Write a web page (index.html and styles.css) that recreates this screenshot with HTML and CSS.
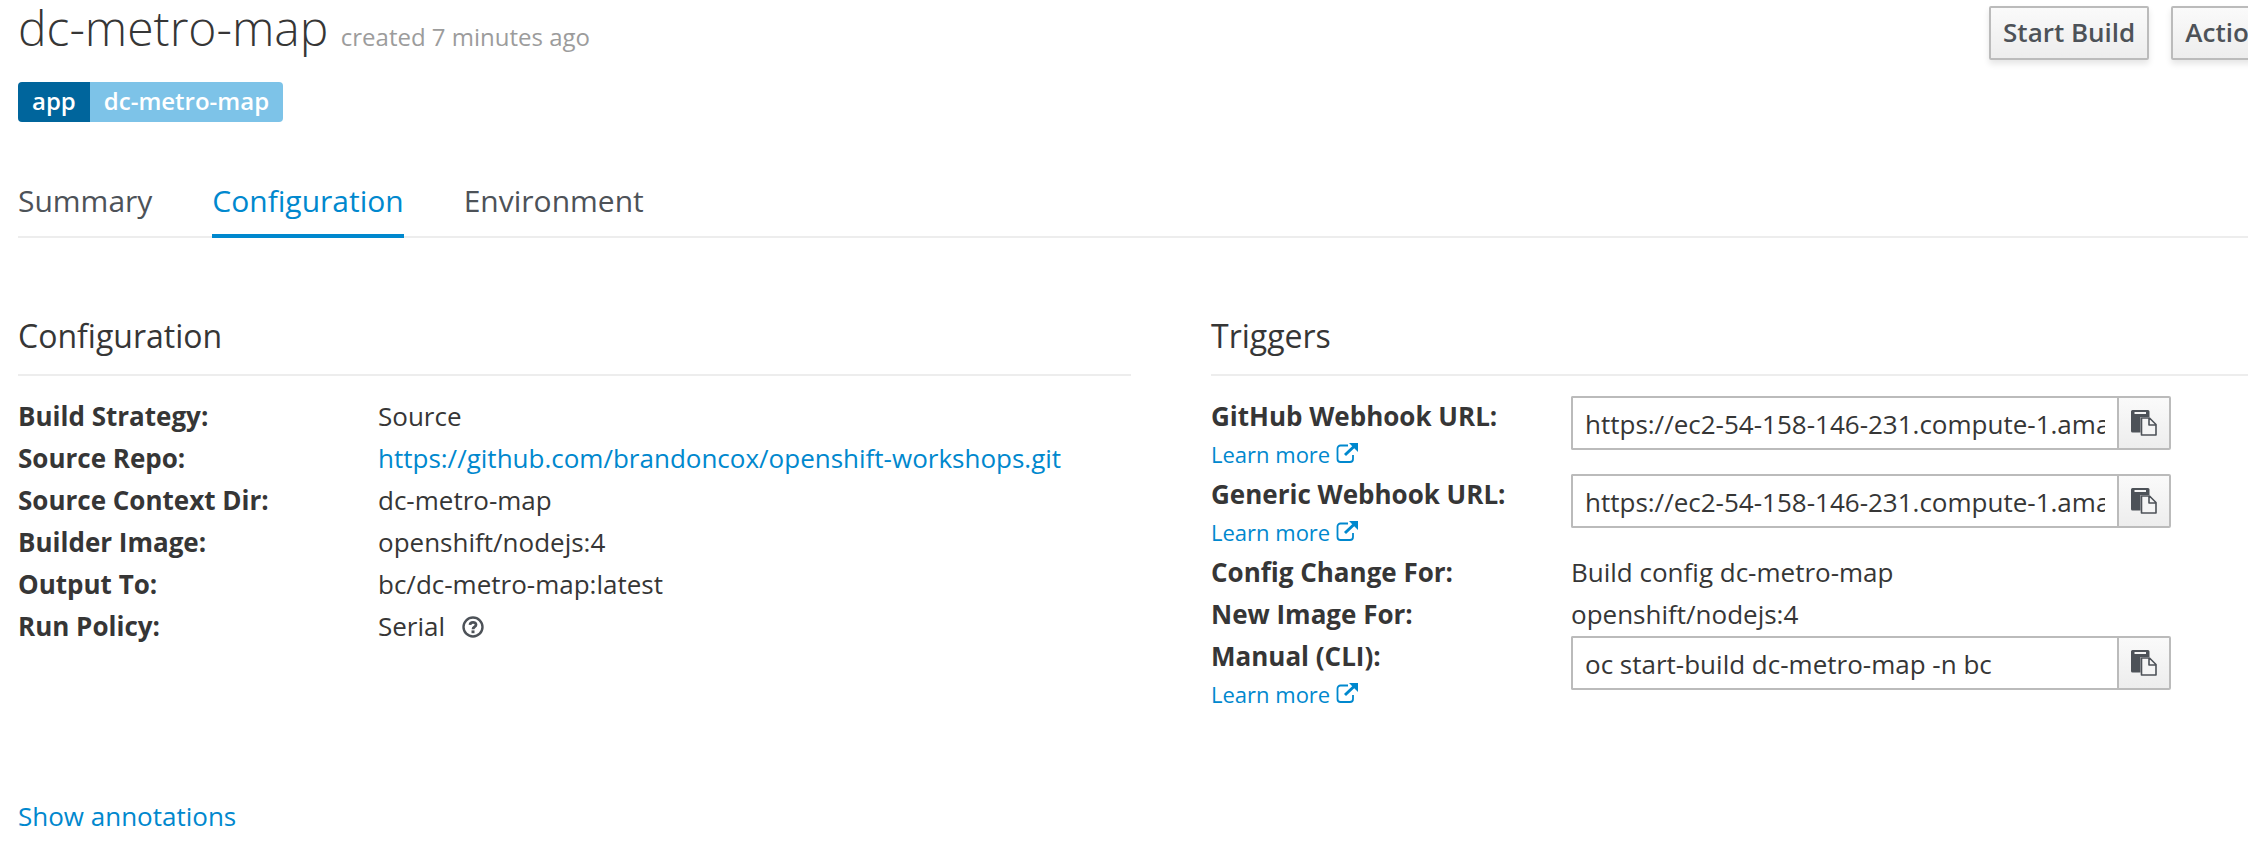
FILE: index.html
```html
<!DOCTYPE html>
<html lang="en">
<head>
<meta charset="utf-8">
<title>dc-metro-map</title>
<link rel="stylesheet" href="styles.css">
</head>
<body>
<svg class="sprite" aria-hidden="true">
  <symbol id="external" viewBox="0 0 22 20">
    <path d="M12 2.500H4.500a3 3 0 0 0-3 3V16a3 3 0 0 0 3 3H14a3 3 0 0 0 3-3v-4" fill="none" stroke="currentColor" stroke-width="1.800"/>
    <path d="M9 12 18 3.500" fill="none" stroke="currentColor" stroke-width="3"/>
    <path d="M13 0H22V9Z" fill="currentColor"/>
  </symbol>
  <symbol id="paste" viewBox="0 0 26 26">
    <path d="M1.500 0H17a1.500 1.500 0 0 1 1.500 1.500V7H9.500V22.500H1.500A1.500 1.500 0 0 1 0 21V1.500A1.500 1.500 0 0 1 1.500 0Z" fill="currentColor"/>
    <path d="M3.500 3H15" stroke="#f5f5f5" stroke-width="2"/>
    <path d="M10.500 8H18.500L25 14.500V25H10.500ZM18 8V15H25" fill="#f5f5f5" stroke="currentColor" stroke-width="1.600" stroke-linejoin="round"/>
  </symbol>
  <symbol id="help" viewBox="0 0 22 22">
    <circle cx="11" cy="11" r="9.500" fill="none" stroke="currentColor" stroke-width="2.400"/>
    <path d="M8 8.800C8.200 5.600 14 5.400 14 8.800C14 11 11 10.800 11 13.200" fill="none" stroke="currentColor" stroke-width="2.800"/>
    <path d="M9.500 14.400h3v2.800h-3z" fill="currentColor"/>
  </symbol>
</svg>
<main class="page">
  <header class="header">
    <h1 class="title">dc-metro-map <small class="created">created 7 minutes ago</small></h1>
    <div class="actions">
      <button class="btn" type="button">Start Build</button>
      <button class="btn" type="button">Actions <span class="caret"></span></button>
    </div>
  </header>
  <div class="labels">
    <a class="label label-key" href="#app">app</a><a class="label label-value" href="#app">dc-metro-map</a>
  </div>
  <nav class="tabs">
    <a class="tab" href="#summary">Summary</a>
    <a class="tab tab-active" href="#configuration" aria-current="page">Configuration</a>
    <a class="tab" href="#environment">Environment</a>
  </nav>
  <div class="columns">
    <section>
      <h2 class="heading">Configuration</h2>
      <dl class="details">
        <dt>Build Strategy:</dt><dd>Source</dd>
        <dt>Source Repo:</dt><dd><a href="#repo">https://github.com/brandoncox/openshift-workshops.git</a></dd>
        <dt>Source Context Dir:</dt><dd>dc-metro-map</dd>
        <dt>Builder Image:</dt><dd>openshift/nodejs:4</dd>
        <dt>Output To:</dt><dd>bc/dc-metro-map:latest</dd>
        <dt>Run Policy:</dt><dd>Serial <svg class="icon-help" role="img" aria-label="Help"><use href="#help"/></svg></dd>
      </dl>
    </section>
    <section>
      <h2 class="heading">Triggers</h2>
      <dl class="details">
        <dt><label for="github">GitHub Webhook URL:</label><a class="learn" href="#learn">Learn more <svg class="icon-external" aria-hidden="true"><use href="#external"/></svg></a></dt>
        <dd><div class="copy"><input class="copy-text" id="github" readonly value="https://ec2-54-158-146-231.compute-1.amazonaws.com:8443/oapi/v1"><button class="copy-btn" type="button" aria-label="Copy"><svg class="icon-paste"><use href="#paste"/></svg></button></div></dd>
        <dt><label for="generic">Generic Webhook URL:</label><a class="learn" href="#learn">Learn more <svg class="icon-external" aria-hidden="true"><use href="#external"/></svg></a></dt>
        <dd><div class="copy"><input class="copy-text" id="generic" readonly value="https://ec2-54-158-146-231.compute-1.amazonaws.com:8443/oapi/v1"><button class="copy-btn" type="button" aria-label="Copy"><svg class="icon-paste"><use href="#paste"/></svg></button></div></dd>
        <dt>Config Change For:</dt><dd>Build config dc-metro-map</dd>
        <dt>New Image For:</dt><dd>openshift/nodejs:4</dd>
        <dt><label for="manual">Manual (CLI):</label><a class="learn" href="#learn">Learn more <svg class="icon-external" aria-hidden="true"><use href="#external"/></svg></a></dt>
        <dd><div class="copy"><input class="copy-text" id="manual" readonly value="oc start-build dc-metro-map -n bc"><button class="copy-btn" type="button" aria-label="Copy"><svg class="icon-paste"><use href="#paste"/></svg></button></div></dd>
      </dl>
    </section>
  </div>
  <a class="annotations" href="#annotations">Show annotations</a>
</main>
</body>
</html>
```
FILE: styles.css
```css
* { box-sizing: border-box; }
body {
  margin: 0;
  overflow-x: hidden;
  background: #fff;
  color: #363636;
  font: 26px/40px "Open Sans", sans-serif;
}
a { color: #0088ce; text-decoration: none; }
.sprite { display: none; }
.page {
  margin-right: -76px;
  padding-left: 18px;
}
.header {
  display: flex;
  justify-content: space-between;
  align-items: flex-start;
  padding-top: 6px;
}
.title {
  margin: 0;
  font-size: 48px;
  font-weight: 300;
  line-height: 44px;
}
.created { color: #9c9c9c; font-size: 24px; font-weight: 400; }
.actions { display: flex; gap: 22px; }
.btn {
  display: flex;
  align-items: center;
  gap: 16px;
  height: 54px;
  padding: 0 12px 2px;
  border: 2px solid #bbb;
  border-radius: 2px;
  background: linear-gradient(#fafafa, #ededed);
  box-shadow: 0 4px 6px rgba(3, 3, 3, 0.1);
  color: #4d5258;
  font: 600 26px/40px "Open Sans", sans-serif;
}
.caret {
  border: 8px solid transparent;
  border-top-color: #4d5258;
  border-bottom: 0;
}
.labels { display: flex; margin-top: 22px; }
.label {
  padding: 0 14px 2px;
  color: #fff;
  font-size: 24px;
  font-weight: 600;
  line-height: 38px;
}
.label-key { border-radius: 4px 0 0 4px; background: #00659c; }
.label-value { border-radius: 0 4px 4px 0; background: #7dc3e8; }
.tabs {
  display: flex;
  gap: 60px;
  margin-top: 52px;
  border-bottom: 2px solid #ededed;
}
.tab {
  margin-bottom: -2px;
  padding: 3px 0 9px;
  border-bottom: 4px solid transparent;
  color: #4d5258;
  font-size: 30px;
  line-height: 48px;
}
.tab-active { border-color: #0088ce; color: #0088ce; }
.columns {
  display: grid;
  grid-template-columns: 1fr 1fr;
  gap: 80px;
  padding-top: 76px;
}
.heading {
  margin: 0 0 20px;
  padding-bottom: 16px;
  border-bottom: 2px solid #ededed;
  font-size: 32px;
  font-weight: 400;
  line-height: 44px;
}
.details {
  display: grid;
  grid-template-columns: 360px 1fr;
  row-gap: 2px;
  margin: 0;
}
.details dt { font-weight: 700; }
.details dd { margin: 0; }
.learn {
  display: block;
  font-size: 22px;
  font-weight: 400;
  line-height: 36px;
}
.copy { display: flex; max-width: 600px; }
.copy-text {
  flex: 1;
  min-width: 0;
  height: 54px;
  padding: 2px 12px 0;
  border: 2px solid #bbb;
  border-right: 0;
  border-radius: 2px 0 0 2px;
  color: #363636;
  font: 26px/40px "Open Sans", sans-serif;
}
.copy-btn {
  display: grid;
  place-items: center;
  width: 54px;
  padding: 0;
  border: 2px solid #bbb;
  border-radius: 0 2px 2px 0;
  background: linear-gradient(#fafafa, #ededed);
  color: #4d5258;
}
.icon-paste { width: 26px; height: 26px; }
.icon-external { width: 22px; height: 20px; }
.icon-help {
  width: 22px;
  height: 22px;
  margin-left: 10px;
  color: #4d5258;
  vertical-align: -2px;
}
.annotations { display: inline-block; margin-top: 84px; }
```
